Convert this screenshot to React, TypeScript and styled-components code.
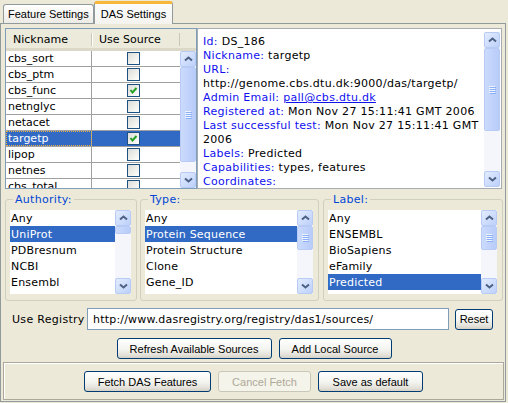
import React from 'react';
import styled, { createGlobalStyle } from 'styled-components';

const SANS = `'DejaVu Sans', Verdana, sans-serif`;
const TAHOMA = `Tahoma, 'Liberation Sans', Arial, sans-serif`;

const GlobalStyle = createGlobalStyle`
  html, body { margin: 0; padding: 0; background: #ece9d8; }
  body { font-family: ${SANS}; font-size: 11px; color: #000; }
  * { box-sizing: border-box; }
`;

const Window = styled.div`
  width: 508px;
  height: 403px;
  background: #ece9d8;
  display: flex;
  flex-direction: column;
  overflow: hidden;
`;

const TabStrip = styled.div`
  display: flex;
  align-items: flex-end;
  height: 23px;
  padding-left: 3px;
  position: relative;
  z-index: 1;
`;

const Tab = styled.div<{ $active?: boolean }>`
  height: ${({ $active }) => ($active ? '23px' : '19px')};
  margin-bottom: ${({ $active }) => ($active ? '-1px' : '0')};
  padding: 0 ${({ $active }) => ($active ? '6px' : '4px')};
  display: flex;
  align-items: center;
  font: 11px ${TAHOMA};
  border: 1px solid #919b9c;
  border-bottom: none;
  border-radius: 3px 3px 0 0;
  background: ${({ $active }) =>
    $active ? 'linear-gradient(#fcfcfe, #f4f3ee)' : 'linear-gradient(#ffffff, #ecebe6)'};
  border-top: ${({ $active }) => ($active ? '3px solid #f9b73a' : '1px solid #919b9c')};
`;

const TabPanel = styled.div`
  width: 506px;
  height: 379px;
  border: 1px solid #919b9c;
  background: #ece9d8;
  display: flex;
  flex-direction: column;
  padding: 4px 2px 0 4px;
`;

const TopRow = styled.div`
  display: flex;
  height: 161px;
`;

const TablePane = styled.div`
  width: 192px;
  border: 1px solid #7f9db9;
  background: #fff;
  display: flex;
`;

const TableBody = styled.div`
  width: 174px;
  display: flex;
  flex-direction: column;
  overflow: hidden;
`;

const HeaderRow = styled.div`
  display: flex;
  height: 22px;
  flex-shrink: 0;
  background: #ebeadb;
  box-shadow: inset 0 -3px #dcd8c7, inset 0 -1px #cbc7b8;
`;

const HeaderCell = styled.div<{ $w: number }>`
  width: ${({ $w }) => $w}px;
  padding: 0 0 1px 7px;
  display: flex;
  align-items: center;
  position: relative;
  &::after {
    content: '';
    position: absolute;
    right: 0;
    top: 4px;
    bottom: 5px;
    width: 1px;
    background: #cbc7b8;
    box-shadow: 1px 0 #fff;
  }
`;

const Row = styled.div<{ $selected?: boolean }>`
  display: flex;
  height: 16px;
  flex-shrink: 0;
  border-bottom: 1px solid #a0a0a0;
  background: ${({ $selected }) => ($selected ? '#316ac5' : '#fff')};
  color: ${({ $selected }) => ($selected ? '#fff' : '#000')};
`;

const NameCell = styled.div<{ $focus?: boolean }>`
  width: 86px;
  padding-left: 2px;
  display: flex;
  align-items: center;
  border-right: 1px solid #a0a0a0;
  outline: ${({ $focus }) => ($focus ? '1px dotted #f0b040' : 'none')};
  outline-offset: -1px;
`;

const CheckCell = styled.div`
  flex: 1;
  display: flex;
  align-items: center;
  justify-content: center;
  padding-right: 6px;
`;

const CheckBox = styled.div`
  width: 13px;
  height: 13px;
  border: 1px solid #1c5180;
  background: linear-gradient(135deg, #dcdcd7, #ffffff);
  display: flex;
  align-items: center;
  justify-content: center;
`;

const SideColumn = styled.div`
  width: 16px;
  display: grid;
  grid-template-rows: 22px 1fr;
`;

const Corner = styled.div`
  background: #ebeadb;
  box-shadow: inset 0 -3px #dcd8c7;
`;

const ScrollTrack = styled.div<{ $gap?: string }>`
  width: 16px;
  flex-shrink: 0;
  align-self: stretch;
  display: flex;
  flex-direction: column;
  background: #f4f6fc;
  margin: ${({ $gap }) => $gap || '0'};
`;

const ScrollButton = styled.div`
  height: 16px;
  flex-shrink: 0;
  border: 1px solid #b7cbf5;
  border-radius: 2px;
  background: linear-gradient(135deg, #e3ecfe, #bcd0fa);
  display: flex;
  align-items: center;
  justify-content: center;
`;

const ThumbArea = styled.div<{ $top: number }>`
  flex: 1;
  padding-top: ${({ $top }) => $top}px;
  display: flex;
  flex-direction: column;
`;

const Thumb = styled.div<{ $size: number }>`
  height: ${({ $size }) => $size}px;
  flex-shrink: 0;
  border: 1px solid #b7cbf5;
  border-radius: 2px;
  background: linear-gradient(90deg, #cbdafd, #b8ccf9);
  display: flex;
  align-items: center;
  justify-content: center;
`;

const DetailPane = styled.div`
  width: 305px;
  border: 1px solid #a5acb2;
  background: #fff;
  display: flex;
`;

const DetailText = styled.div`
  flex: 1;
  padding: 6px 0 0 5px;
  overflow: hidden;
  line-height: 14px;
  letter-spacing: 0.3px;
`;

const Line = styled.div`
  height: 14px;
  white-space: nowrap;
`;

const Key = styled.span`
  color: #1010ee;
`;

const Link = styled.span`
  color: #1010ee;
  text-decoration: underline;
`;

const GroupRow = styled.div`
  display: flex;
  margin-top: 4px;
  height: 108px;
`;

const Group = styled.fieldset<{ $w: number; $ml: number }>`
  width: ${({ $w }) => $w}px;
  margin: 0 0 0 ${({ $ml }) => $ml}px;
  padding: 4px 5px 4px 4px;
  border: 1px solid #d0d0bf;
  border-radius: 3px;
  min-width: 0;
`;

const Legend = styled.legend`
  padding: 0 2px;
  margin-left: 3px;
  color: #0046d5;
  font-size: 11px;
  line-height: 13px;
  letter-spacing: 0.3px;
`;

const ListBox = styled.div`
  height: 84px;
  background: #fff;
  display: flex;
`;

const ListItems = styled.div`
  flex: 1;
  min-width: 0;
  display: flex;
  flex-direction: column;
  overflow: hidden;
`;

const ListItem = styled.div<{ $selected?: boolean }>`
  height: 16px;
  flex-shrink: 0;
  padding-left: 1px;
  display: flex;
  align-items: center;
  white-space: nowrap;
  letter-spacing: 0.2px;
  background: ${({ $selected }) => ($selected ? '#316ac5' : 'transparent')};
  color: ${({ $selected }) => ($selected ? '#fff' : '#000')};
`;

const RegistryRow = styled.div`
  display: flex;
  align-items: center;
  height: 22px;
  margin-top: 7px;
  padding-left: 7px;
`;

const RegistryLabel = styled.span`
  width: 75px;
  letter-spacing: 0.3px;
`;

const TextField = styled.div`
  width: 362px;
  height: 22px;
  border: 1px solid #7f9db9;
  background: #fff;
  padding-left: 5px;
  display: flex;
  align-items: center;
  letter-spacing: 0.2px;
`;

const ButtonRow = styled.div<{ $mt: number }>`
  display: flex;
  justify-content: center;
  gap: 7px;
  margin-top: ${({ $mt }) => $mt}px;
`;

const Button = styled.button<{ $w: number }>`
  width: ${({ $w }) => $w}px;
  height: 21px;
  padding: 0;
  border: 1px solid #003c74;
  border-radius: 3px;
  background: linear-gradient(#ffffff, #f3f3ef 55%, #e2e0d8 85%, #d6d0c5);
  font: 11px ${TAHOMA};
  color: #000;
  &:disabled {
    border-color: #c9c7ba;
    color: #aca899;
    background: #f5f4ea;
  }
`;

const ResetButton = styled(Button)`
  margin-left: 6px;
`;

const BottomPanel = styled.div`
  width: 501px;
  height: 38px;
  margin: 3px 0 0 -2px;
  border: 1px solid #aca899;
  box-shadow: inset 1px 1px #fff;
  padding-top: 8px;
`;

const Chevron = ({ down }: { down?: boolean }) => (
  <svg width="9" height="6" viewBox="0 0 9 6">
    <path
      d={down ? 'M1 1.5 L4.5 4.5 L8 1.5' : 'M1 4.5 L4.5 1.5 L8 4.5'}
      fill="none"
      stroke="#4d6185"
      strokeWidth="2"
    />
  </svg>
);

const Grip = () => (
  <svg width="7" height="8" viewBox="0 0 7 8">
    {[0, 2, 4, 6].map((y) => (
      <g key={y}>
        <rect x="0" y={y} width="6" height="1" fill="#eef4fe" />
        <rect x="1" y={y + 1} width="6" height="1" fill="#8cb0f8" />
      </g>
    ))}
  </svg>
);

const Tick = () => (
  <svg width="9" height="9" viewBox="0 0 9 9">
    <path d="M1.5 4 L3.5 6.5 L7.5 2" fill="none" stroke="#21a121" strokeWidth="2" />
  </svg>
);

const ScrollBar: React.FC<{ top: number; size: number; gap?: string }> = ({ top, size, gap }) => (
  <ScrollTrack $gap={gap}>
    <ScrollButton>
      <Chevron />
    </ScrollButton>
    <ThumbArea $top={top}>
      <Thumb $size={size}>{size > 12 && <Grip />}</Thumb>
    </ThumbArea>
    <ScrollButton>
      <Chevron down />
    </ScrollButton>
  </ScrollTrack>
);

const sources = [
  { name: 'cbs_sort', on: false },
  { name: 'cbs_ptm', on: false },
  { name: 'cbs_func', on: true },
  { name: 'netnglyc', on: false },
  { name: 'netacet', on: false },
  { name: 'targetp', on: true, selected: true },
  { name: 'lipop', on: false },
  { name: 'netnes', on: false },
  { name: 'cbs_total', on: false },
];

const groups = [
  { title: 'Authority:', w: 132, ml: 0, items: ['Any', 'UniProt', 'PDBresnum', 'NCBI', 'Ensembl'], sel: 1, top: 0, size: 8 },
  { title: 'Type:', w: 179, ml: 3, items: ['Any', 'Protein Sequence', 'Protein Structure', 'Clone', 'Gene_ID'], sel: 1, top: 0, size: 24 },
  { title: 'Label:', w: 180, ml: 4, items: ['Any', 'ENSEMBL', 'BioSapiens', 'eFamily', 'Predicted'], sel: 4, top: 0, size: 24 },
];

export default function App() {
  return (
    <>
      <GlobalStyle />
      <Window>
        <TabStrip>
          <Tab>Feature Settings</Tab>
          <Tab $active>DAS Settings</Tab>
        </TabStrip>
        <TabPanel>
          <TopRow>
            <TablePane>
              <TableBody>
                <HeaderRow>
                  <HeaderCell $w={86}>Nickname</HeaderCell>
                  <HeaderCell $w={88}>Use Source</HeaderCell>
                </HeaderRow>
                {sources.map((s) => (
                  <Row key={s.name} $selected={s.selected}>
                    <NameCell $focus={s.selected}>{s.name}</NameCell>
                    <CheckCell>
                      <CheckBox>{s.on && <Tick />}</CheckBox>
                    </CheckCell>
                  </Row>
                ))}
              </TableBody>
              <SideColumn>
                <Corner />
                <ScrollBar top={0} size={95} />
              </SideColumn>
            </TablePane>
            <DetailPane>
              <DetailText>
                <Line><Key>Id:</Key> DS_186</Line>
                <Line><Key>Nickname:</Key> targetp</Line>
                <Line><Key>URL:</Key></Line>
                <Line>http://genome.cbs.dtu.dk:9000/das/targetp/</Line>
                <Line><Key>Admin Email:</Key> <Link>pall@cbs.dtu.dk</Link></Line>
                <Line><Key>Registered at:</Key> Mon Nov 27 15:11:41 GMT 2006</Line>
                <Line><Key>Last successful test:</Key> Mon Nov 27 15:11:41 GMT</Line>
                <Line>2006</Line>
                <Line><Key>Labels:</Key> Predicted</Line>
                <Line><Key>Capabilities:</Key> types, features</Line>
                <Line><Key>Coordinates:</Key></Line>
              </DetailText>
              <ScrollBar top={0} size={83} gap="3px 1px 1px 0" />
            </DetailPane>
          </TopRow>
          <GroupRow>
            {groups.map((g) => (
              <Group key={g.title} $w={g.w} $ml={g.ml}>
                <Legend>{g.title}</Legend>
                <ListBox>
                  <ListItems>
                    {g.items.map((it, i) => (
                      <ListItem key={it} $selected={i === g.sel}>{it}</ListItem>
                    ))}
                  </ListItems>
                  <ScrollBar top={g.top} size={g.size} />
                </ListBox>
              </Group>
            ))}
          </GroupRow>
          <RegistryRow>
            <RegistryLabel>Use Registry</RegistryLabel>
            <TextField>http://www.dasregistry.org/registry/das1/sources/</TextField>
            <ResetButton $w={38}>Reset</ResetButton>
          </RegistryRow>
          <ButtonRow $mt={8}>
            <Button $w={155}>Refresh Available Sources</Button>
            <Button $w={113}>Add Local Source</Button>
          </ButtonRow>
          <BottomPanel>
            <ButtonRow $mt={0}>
              <Button $w={127}>Fetch DAS Features</Button>
              <Button $w={93} disabled>Cancel Fetch</Button>
              <Button $w={105}>Save as default</Button>
            </ButtonRow>
          </BottomPanel>
        </TabPanel>
      </Window>
    </>
  );
}
